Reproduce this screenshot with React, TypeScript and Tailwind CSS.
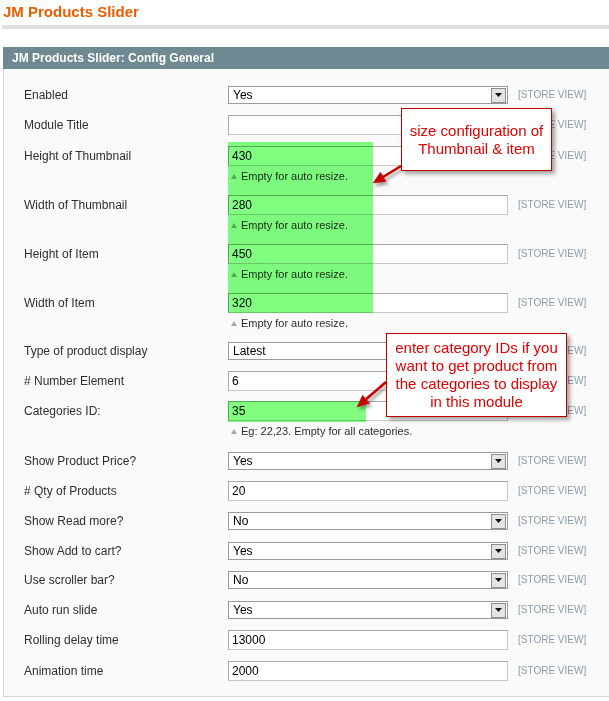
import React from "react";

type Row = {
  label: string;
  kind: "select" | "input";
  value: string;
  mt: string;
  note?: string;
};

const resizeNote = "Empty for auto resize.";

// Rows of the config form, top to bottom
const rows: Row[] = [
  { label: "Enabled", kind: "select", value: "Yes", mt: "" },
  { label: "Module Title", kind: "input", value: "", mt: "mt-[11px]" },
  { label: "Height of Thumbnail", kind: "input", value: "430", mt: "mt-[11px]", note: resizeNote },
  { label: "Width of Thumbnail", kind: "input", value: "280", mt: "mt-[9px]", note: resizeNote },
  { label: "Height of Item", kind: "input", value: "450", mt: "mt-[9px]", note: resizeNote },
  { label: "Width of Item", kind: "input", value: "320", mt: "mt-[9px]", note: resizeNote },
  { label: "Type of product display", kind: "select", value: "Latest", mt: "mt-[9px]" },
  { label: "# Number Element", kind: "input", value: "6", mt: "mt-[11px]" },
  {
    label: "Categories ID:",
    kind: "input",
    value: "35",
    mt: "mt-[10px]",
    note: "Eg: 22,23. Empty for all categories.",
  },
  { label: "Show Product Price?", kind: "select", value: "Yes", mt: "mt-[11px]" },
  { label: "# Qty of Products", kind: "input", value: "20", mt: "mt-[11px]" },
  { label: "Show Read more?", kind: "select", value: "No", mt: "mt-[11px]" },
  { label: "Show Add to cart?", kind: "select", value: "Yes", mt: "mt-[12px]" },
  { label: "Use scroller bar?", kind: "select", value: "No", mt: "mt-[11px]" },
  { label: "Auto run slide", kind: "select", value: "Yes", mt: "mt-[12px]" },
  { label: "Rolling delay time", kind: "input", value: "13000", mt: "mt-[11px]" },
  { label: "Animation time", kind: "input", value: "2000", mt: "mt-[11px]" },
];

function SelectBox({ value }: { value: string }) {
  return (
    <div className="flex h-[18px] w-[280px] items-center border border-[#9a9a9a] bg-white pl-[4px] pr-[1px]">
      <span className="flex-1 text-[12px] leading-[16px] text-black">{value}</span>
      <span className="flex h-[15px] w-[15px] items-center justify-center border border-[#8f8f8f] bg-[#e4e4e4]">
        <svg width="7" height="4" viewBox="0 0 7 4">
          <path d="M0 0 L7 0 L3.5 4 Z" fill="#111" />
        </svg>
      </span>
    </div>
  );
}

function TextBox({ value }: { value: string }) {
  return (
    <div className="flex h-[20px] w-[280px] items-center border border-t-[#a8a8a8] border-l-[#a8a8a8] border-r-[#c8c8c8] border-b-[#c8c8c8] bg-white pl-[3px]">
      <span className="text-[12px] leading-[18px] text-black">{value}</span>
    </div>
  );
}

function FormRow({ row }: { row: Row }) {
  const lead = row.kind === "select" ? "leading-[18px]" : "leading-[20px]";
  return (
    <div className={row.mt}>
      <div className="flex items-start">
        <div className={`w-[204px] text-[12px] text-[#2f2f2f] ${lead}`}>{row.label}</div>
        {row.kind === "select" ? <SelectBox value={row.value} /> : <TextBox value={row.value} />}
        <div className={`ml-[10px] text-[10px] text-[#8d9cab] ${lead}`}>[STORE VIEW]</div>
      </div>
      {row.note && (
        <div className="ml-[207px] flex h-[20px] items-center gap-[4px]">
          <svg width="6" height="5" viewBox="0 0 6 5">
            <path d="M3 0 L6 5 L0 5 Z" fill="#a9a9a9" />
          </svg>
          <span className="text-[11px] leading-[20px] text-[#2f2f2f]">{row.note}</span>
        </div>
      )}
    </div>
  );
}

export default function App() {
  return (
    <div className="relative isolate h-[701px] w-[609px] overflow-hidden bg-white font-['Liberation_Sans',Arial,sans-serif]">
      {/* Page title */}
      <div className="ml-[2px] border-b-4 border-[#dfdfdf] pb-[4px] pl-[1px] pt-[3px]">
        <h1 className="text-[15px] font-bold leading-[18px] text-[#eb5e00]">JM Products Slider</h1>
      </div>

      {/* Config panel */}
      <div className="ml-[3px] mt-[18px] w-[640px]">
        <div className="h-[22px] bg-[#6f8992] pl-[9px] text-[12px] font-bold leading-[22px] text-white">
          JM Products Slider: Config General
        </div>
        <div className="border-b border-l border-[#d3d3d3] bg-[#fafafa] pb-[15px] pl-[20px] pt-[17px]">
          {rows.map((row) => (
            <FormRow key={row.label} row={row} />
          ))}
        </div>
      </div>

      {/* Green highlight marks */}
      <div className="pointer-events-none absolute left-[228px] top-[142px] h-[171px] w-[145px] bg-[#80ff80] mix-blend-multiply" />
      <div className="pointer-events-none absolute left-[228px] top-[401px] h-[21px] w-[138px] bg-[#80ff80] mix-blend-multiply" />

      {/* Arrows */}
      <svg className="pointer-events-none absolute left-0 top-0" width="609" height="701" viewBox="0 0 609 701">
        <defs>
          <filter id="arrowShadow" x="-20%" y="-20%" width="160%" height="160%">
            <feDropShadow dx="2" dy="3" stdDeviation="1.5" floodColor="#000" floodOpacity="0.35" />
          </filter>
        </defs>
        <g filter="url(#arrowShadow)" fill="#c40000" stroke="#c40000">
          <line x1="401" y1="166" x2="383" y2="177" strokeWidth="2.6" />
          <path d="M373 183 L386 181.5 L380.5 172.2 Z" strokeWidth="0.5" />
          <line x1="386" y1="382" x2="366" y2="399.3" strokeWidth="2.6" />
          <path d="M357 407 L369.6 403.2 L362.6 395.2 Z" strokeWidth="0.5" />
        </g>
      </svg>

      {/* Callouts */}
      <div className="absolute left-[401px] top-[108px] flex h-[63px] w-[151px] flex-col items-center justify-center border border-[#c00000] bg-white shadow-[3px_3px_4px_rgba(0,0,0,0.35)]">
        <p className="text-center text-[15px] leading-[18px] text-[#e00000]">
          size configuration of
          <br />
          Thumbnail &amp; item
        </p>
      </div>
      <div className="absolute left-[386px] top-[333px] flex h-[84px] w-[181px] flex-col items-center justify-center border border-[#c00000] bg-white shadow-[3px_3px_4px_rgba(0,0,0,0.35)]">
        <p className="text-center text-[15px] leading-[18px] text-[#e00000]">
          enter category IDs if you
          <br />
          want to get product from
          <br />
          the categories to display
          <br />
          in this module
        </p>
      </div>
    </div>
  );
}
